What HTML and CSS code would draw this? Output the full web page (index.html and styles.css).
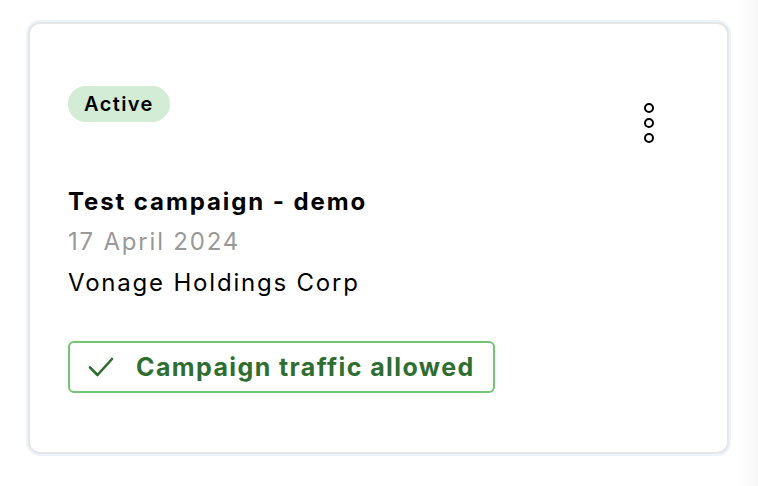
FILE: index.html
```html
<!DOCTYPE html>
<html lang="en">
<head>
    <meta charset="UTF-8">
    <meta name="viewport" content="width=device-width, initial-scale=1.0">
    <title>Campaign card</title>
    <link rel="stylesheet" href="styles.css">
</head>
<body>
    <div class="card">
        <div class="card-head">
            <span class="badge">Active</span>
            <button class="more" aria-label="More actions">
                <svg width="14" height="46" viewBox="0 0 14 46">
                    <circle cx="7" cy="8" r="4" fill="none" stroke="#000" stroke-width="2"/>
                    <circle cx="7" cy="23" r="4" fill="none" stroke="#000" stroke-width="2"/>
                    <circle cx="7" cy="38" r="4" fill="none" stroke="#000" stroke-width="2"/>
                </svg>
            </button>
        </div>

        <div class="info">
            <h2 class="title">Test campaign - demo</h2>
            <div class="date">17 April 2024</div>
            <div class="company">Vonage Holdings Corp</div>
        </div>

        <div class="status">
            <svg class="check" width="26" height="22" viewBox="0 0 26 22">
                <path d="M2 11.5 L9.5 19 L24 3" fill="none" stroke="#2f6e31" stroke-width="2.6" stroke-linecap="round" stroke-linejoin="round"/>
            </svg>
            <span>Campaign traffic allowed</span>
        </div>
    </div>
</body>
</html>
```

FILE: styles.css
```css
/* --- BASE ---------------------------------------------- */
* { box-sizing: border-box; margin: 0; padding: 0; }
html, body { height: 100%; }
body {
    font-family: "Inter", "Liberation Sans", sans-serif;
    color: #000;
    background: linear-gradient(to right, #fff 738px, #f6f6f6 758px);
    padding: 22px 28px;
}

/* --- CARD ---------------------------------------------- */
.card {
    width: 701px;
    height: 432px;
    border: 2px solid #e6e6e8;
    border-radius: 12px;
    box-shadow: 0 0 0 2px #edf3fa;
    background: #fff;
    padding: 62px 40px 0 38px;
}

.card-head {
    display: flex;
    justify-content: space-between;
    align-items: flex-start;
}

.badge {
    display: inline-flex;
    align-items: center;
    height: 36px;
    padding: 0 16px;
    border-radius: 18px;
    background: #d3ecd5;
    font-size: 20px;
    font-weight: 600;
    letter-spacing: 1.4px;
}

.more {
    border: none;
    background: none;
    margin: 14px 31px 0 0;
    cursor: pointer;
    line-height: 0;
}

/* --- INFO ---------------------------------------------- */
.info { margin-top: 36px; }
.title {
    font-size: 24px;
    font-weight: 700;
    line-height: 40px;
    letter-spacing: 1.9px;
}
.date, .company {
    font-size: 24px;
    line-height: 40px;
    letter-spacing: 1.8px;
}
.date { color: #999; }
.company { margin-top: 1px; }

/* --- STATUS -------------------------------------------- */
.status {
    margin-top: 38px;
    display: inline-flex;
    align-items: center;
    height: 52px;
    padding: 0 18px 0 18px;
    border: 2px solid #73c474;
    border-radius: 6px;
    color: #2f6e31;
    font-size: 25px;
    font-weight: 700;
    letter-spacing: 1.4px;
}
.check { margin-right: 22px; }
```
